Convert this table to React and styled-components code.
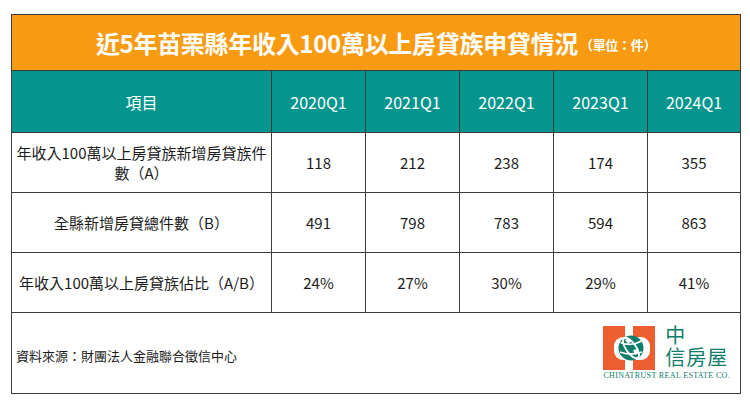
import React from "react";
import styled, { createGlobalStyle } from "styled-components";

const COLORS = {
  orange: "#f89b12",
  teal: "#03958e",
  line: "#3c3c3c",
  text: "#1c1c1c",
  brand: "#0f7d6c",
  brandOrange: "#ec5d2f",
};

const GlobalStyle = createGlobalStyle`
  body {
    margin: 0;
    background: #fff;
    font-family: "Noto Sans CJK TC", "Noto Sans", sans-serif;
  }
`;

const Page = styled.div`
  padding: 14px 0 0 11px;
`;

const Table = styled.table`
  width: 729px;
  border-collapse: collapse;
  table-layout: fixed;
  border: 1px solid ${COLORS.line};
  td,
  th {
    border: 1px solid ${COLORS.line};
    padding: 0;
  }
`;

const TitleCell = styled.th`
  height: 55px;
  background: ${COLORS.orange};
  color: #fff;
  font-size: 24px;
  font-weight: 700;
  text-align: center;
  vertical-align: middle;
  letter-spacing: -0.3px;
`;

const Unit = styled.span`
  font-size: 13px;
  font-weight: 700;
  margin-left: 2px;
  vertical-align: 3px;
`;

const HeadCell = styled.th`
  height: 61px;
  background: ${COLORS.teal};
  color: #fff;
  font-size: 16px;
  font-weight: 400;
  text-align: center;
`;

const Cell = styled.td`
  height: 59px;
  color: ${COLORS.text};
  font-size: 15px;
  line-height: 20px;
  text-align: center;
  padding: 0 4px;
`;

const FooterCell = styled.td`
  height: 80px;
`;

const Footer = styled.div`
  display: flex;
  align-items: center;
  justify-content: space-between;
  padding: 0 10px 0 4px;
`;

const Source = styled.span`
  font-size: 13px;
  color: ${COLORS.text};
  margin-top: 4px;
`;

const Logo = styled.div`
  display: grid;
  grid-template-columns: auto auto;
  column-gap: 8px;
`;

const LogoName = styled.div`
  display: flex;
  flex-direction: column;
  color: ${COLORS.brand};
  font-size: 20px;
  line-height: 22px;
  letter-spacing: 1px;
  margin-top: -2px;
`;

const LogoEn = styled.div`
  grid-column: 1 / span 2;
  margin-top: 1px;
  font-family: "Liberation Serif", serif;
  font-size: 8px;
  line-height: 9px;
  color: ${COLORS.brand};
  letter-spacing: 0.35px;
  white-space: nowrap;
`;

const years = ["2020Q1", "2021Q1", "2022Q1", "2023Q1", "2024Q1"];

const rows = [
  {
    label: (
      <>
        年收入100萬以上房貸族新增房貸族件
        <br />
        數（A）
      </>
    ),
    values: ["118", "212", "238", "174", "355"],
  },
  { label: "全縣新增房貸總件數（B）", values: ["491", "798", "783", "594", "863"] },
  { label: "年收入100萬以上房貸族佔比（A/B）", values: ["24%", "27%", "30%", "29%", "41%"] },
];

const Mark = () => (
  <svg width="52" height="44" viewBox="0 0 52 44">
    <rect x="0" y="0" width="52" height="44" fill={COLORS.brandOrange} />
    <rect x="22" y="0" width="8" height="44" fill="#fff" />
    <rect x="11" y="11" width="36" height="23" rx="9" fill="#fff" />
    <circle cx="28" cy="22" r="12.5" fill={COLORS.brand} />
    <g fill="none" stroke="#fff" strokeWidth="1.8">
      <ellipse cx="28" cy="22" rx="5" ry="12" transform="rotate(-35 28 22)" />
      <path d="M17.5 16.5 Q28 21 38.5 15" />
      <path d="M17 26 Q27 30 39 26" />
    </g>
    <path d="M22 14 l4 -2 l3 3 l-4 3 z M30 24 l5 -1 l1 4 l-4 2 z" fill="#fff" />
  </svg>
);

export default function App() {
  return (
    <Page>
      <GlobalStyle />
      <Table>
        <colgroup>
          <col style={{ width: 260 }} />
          <col style={{ width: 94 }} />
          <col style={{ width: 94 }} />
          <col style={{ width: 94 }} />
          <col style={{ width: 94 }} />
          <col style={{ width: 93 }} />
        </colgroup>
        <thead>
          <tr>
            <TitleCell colSpan={6}>
              近5年苗栗縣年收入100萬以上房貸族申貸情況
              <Unit>（單位：件）</Unit>
            </TitleCell>
          </tr>
          <tr>
            <HeadCell>項目</HeadCell>
            {years.map((y) => (
              <HeadCell key={y}>{y}</HeadCell>
            ))}
          </tr>
        </thead>
        <tbody>
          {rows.map((r, i) => (
            <tr key={i}>
              <Cell>{r.label}</Cell>
              {r.values.map((v, j) => (
                <Cell key={j}>{v}</Cell>
              ))}
            </tr>
          ))}
          <tr>
            <FooterCell colSpan={6}>
              <Footer>
                <Source>資料來源：財團法人金融聯合徵信中心</Source>
                <Logo>
                  <Mark />
                  <LogoName>
                    <span>中</span>
                    <span>信房屋</span>
                  </LogoName>
                  <LogoEn>CHINATRUST REAL ESTATE CO.</LogoEn>
                </Logo>
              </Footer>
            </FooterCell>
          </tr>
        </tbody>
      </Table>
    </Page>
  );
}
